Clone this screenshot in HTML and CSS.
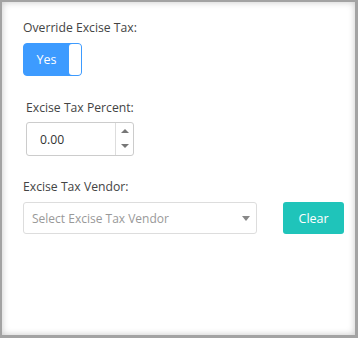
FILE: index.html
```html
<!DOCTYPE html>
<html lang="en">
<head>
  <meta charset="UTF-8">
  <title>Excise Tax</title>
  <link rel="stylesheet" href="styles.css">
</head>
<body>
  <div class="panel">
    <div class="field">
      <label class="field-label">Override Excise Tax:</label>
      <div class="toggle">
        <span class="toggle-on">Yes</span>
        <span class="toggle-knob"></span>
      </div>
    </div>

    <div class="field field-indent">
      <label class="field-label">Excise Tax Percent:</label>
      <div class="number-input">
        <span class="number-value">0.00</span>
        <div class="spinner">
          <span class="spin-up"></span>
          <span class="spin-down"></span>
        </div>
      </div>
    </div>

    <div class="field">
      <label class="field-label">Excise Tax Vendor:</label>
      <div class="vendor-row">
        <div class="select">
          <span class="placeholder">Select Excise Tax Vendor</span>
          <span class="caret"></span>
        </div>
        <button class="btn-clear">Clear</button>
      </div>
    </div>
  </div>
</body>
</html>
```

FILE: styles.css
```css
body {
  margin: 0;
  font-family: "Open Sans", sans-serif;
  font-size: 12.2px;
  color: #444;
  background: #fff;
}

.panel {
  height: 338px;
  box-sizing: border-box;
  border: 2px solid #a3a3a3;
  border-right-width: 3px;
  border-bottom-width: 3px;
  box-shadow: inset 0 0 7px rgba(0, 0, 0, 0.22);
  padding: 17px 11px 0 21px;
}

.field-label {
  display: block;
  line-height: 18px;
}

.field {
  margin-bottom: 23px;
}

.field-indent {
  margin-left: 3px;
  margin-bottom: 22px;
}

/* toggle */
.toggle {
  margin-top: 6px;
  width: 59px;
  height: 33px;
  box-sizing: border-box;
  display: flex;
  background: #3d9bff;
  border: 1px solid #3d9bff;
  border-radius: 4px;
}

.toggle-on {
  flex: 1;
  display: flex;
  align-items: center;
  justify-content: center;
  color: #fff;
  font-size: 12.5px;
}

.toggle-knob {
  width: 12px;
  background: #fff;
  border-radius: 3px;
}

/* number input */
.number-input {
  margin-top: 5px;
  width: 108px;
  height: 34px;
  box-sizing: border-box;
  display: flex;
  border: 1px solid #ccc;
  border-radius: 3px;
}

.number-value {
  flex: 1;
  display: flex;
  align-items: center;
  padding-left: 13px;
  color: #333;
}

.spinner {
  width: 17px;
  border-left: 1px solid #ddd;
  display: flex;
  flex-direction: column;
  align-items: center;
  justify-content: space-between;
  padding: 6px 0 7px;
}

.spin-up {
  width: 0;
  height: 0;
  border-left: 4px solid transparent;
  border-right: 4px solid transparent;
  border-bottom: 4px solid #777;
}

.spin-down {
  width: 0;
  height: 0;
  border-left: 4px solid transparent;
  border-right: 4px solid transparent;
  border-top: 4px solid #777;
}

/* vendor */
.vendor-row {
  margin-top: 6px;
  display: flex;
  align-items: flex-start;
  gap: 26px;
}

.select {
  width: 235px;
  height: 32px;
  box-sizing: border-box;
  display: flex;
  align-items: center;
  justify-content: space-between;
  border: 1px solid #ddd;
  border-radius: 3px;
  padding: 0 6px 0 8px;
}

.placeholder {
  color: #999;
  font-size: 12px;
}

.caret {
  width: 0;
  height: 0;
  border-left: 4px solid transparent;
  border-right: 4px solid transparent;
  border-top: 5px solid #888;
}

.btn-clear {
  width: 61px;
  height: 32px;
  border: none;
  border-radius: 3px;
  background: #1fc4ba;
  color: #fff;
  font-family: "Open Sans", sans-serif;
  font-size: 12.5px;
  padding: 0;
}
```
